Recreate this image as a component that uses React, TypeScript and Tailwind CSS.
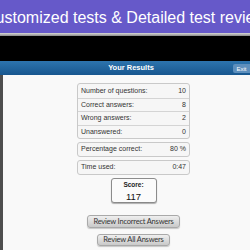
import React from "react";

const rows = [
  ["Number of questions:", "10"],
  ["Correct answers:", "8"],
  ["Wrong answers:", "2"],
  ["Unanswered:", "0"],
];

export default function App() {
  return (
    <div className="w-[250px] h-[250px] overflow-hidden bg-black flex flex-col" style={{ fontFamily: '"Liberation Sans", Arial, sans-serif' }}>
      <div className="h-[33px] bg-[#6659c9] flex justify-center items-center overflow-hidden pl-[8px] shrink-0">
        <span className="whitespace-nowrap text-white text-[16px] leading-none pt-[2px]">Customized tests &amp; Detailed test reviews</span>
      </div>
      <div className="h-[3px] bg-gradient-to-b from-[#d8d8d8] to-[#8a8a8a] shrink-0" />
      <div className="h-[25px] bg-black shrink-0" />
      <div className="h-[14px] bg-gradient-to-b from-[#2d74ae] to-[#18578f] relative flex items-center justify-center pl-[12px] shrink-0">
        <span className="text-white text-[7.5px] font-bold leading-none">Your Results</span>
        <div className="absolute right-0 top-[3px] w-[17px] h-[9px] bg-[#5d8fbd] rounded-l-[2px] flex items-center justify-center">
          <span className="text-white text-[6px] leading-none">Exit</span>
        </div>
      </div>
      <div className="flex-1 flex">
        <div className="w-[3px] bg-[#4e4e4e]" />
        <div className="flex-1 bg-[#f9f9f9] flex flex-col items-center pt-[8px] pl-[14px]">
          <div className="w-[113px] flex flex-col gap-[3px]">
            <div className="border border-[#c9c9c9] rounded-[3px] bg-[#f6f6f6]">
              {rows.map(([k, v], i) => (
                <div key={k} className={"h-[13.5px] flex items-center justify-between px-[3px] text-[7px] text-[#333] " + (i > 0 ? "border-t border-[#d4d4d4]" : "")}>
                  <span>{k}</span>
                  <span>{v}</span>
                </div>
              ))}
            </div>
            <div className="border border-[#c9c9c9] rounded-[3px] bg-[#f6f6f6] h-[15px] flex items-center justify-between px-[3px] text-[7px] text-[#333]">
              <span>Percentage correct:</span>
              <span>80 %</span>
            </div>
            <div className="border border-[#c9c9c9] rounded-[3px] bg-[#f6f6f6] h-[15px] flex items-center justify-between px-[3px] text-[7px] text-[#333]">
              <span>Time used:</span>
              <span>0:47</span>
            </div>
          </div>
          <div className="mt-[3px] w-[46px] h-[25px] border border-[#8c8c8c] rounded-[3px] bg-[#fbfbfb] shadow-[0_1px_1px_rgba(0,0,0,0.3)] flex flex-col items-center pt-[3px]">
            <span className="text-[6.5px] font-bold leading-none text-[#222]">Score:</span>
            <span className="text-[9.5px] leading-none text-[#111] mt-[3px] border-b border-[#888] px-[8px] pb-[1px]">117</span>
          </div>
          <div className="mt-[12px] h-[13px] px-[5px] rounded-[3px] border border-[#a9a9a9] bg-gradient-to-b from-[#efefef] to-[#c9c9c9] flex items-center shadow-[0_1px_1px_rgba(0,0,0,0.2)]">
            <span className="text-[7.5px] tracking-[-0.2px] text-[#333] leading-none" style={{ fontFamily: 'Lato, sans-serif' }}>Review Incorrect Answers</span>
          </div>
          <div className="mt-[6px] h-[12px] px-[5px] rounded-[3px] border border-[#a9a9a9] bg-gradient-to-b from-[#efefef] to-[#c9c9c9] flex items-center shadow-[0_1px_1px_rgba(0,0,0,0.2)]">
            <span className="text-[7.5px] tracking-[-0.2px] text-[#333] leading-none" style={{ fontFamily: 'Lato, sans-serif' }}>Review All Answers</span>
          </div>
        </div>
      </div>
    </div>
  );
}
